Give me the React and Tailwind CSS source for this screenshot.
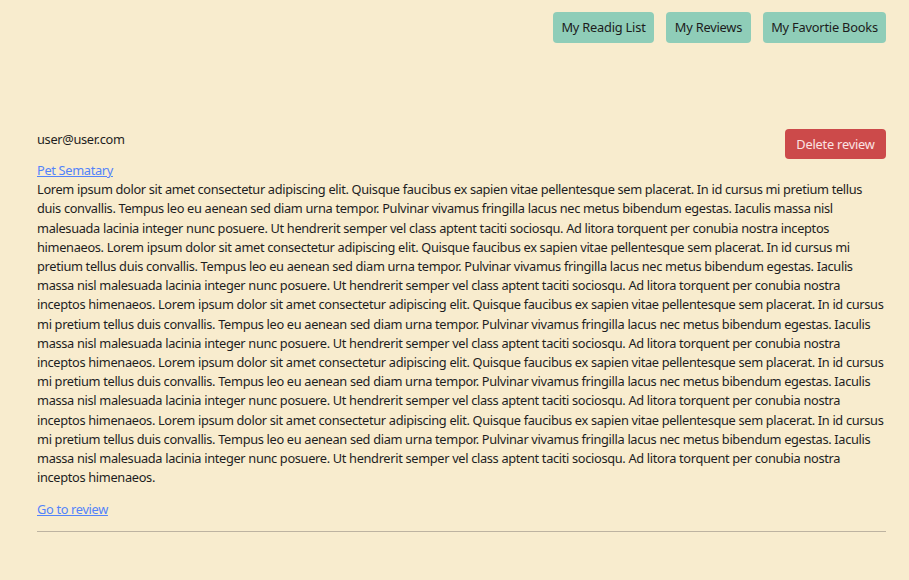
import React from 'react';

const lorem =
  'Lorem ipsum dolor sit amet consectetur adipiscing elit. Quisque faucibus ex sapien vitae pellentesque sem placerat. In id cursus mi pretium tellus duis convallis. Tempus leo eu aenean sed diam urna tempor. Pulvinar vivamus fringilla lacus nec metus bibendum egestas. Iaculis massa nisl malesuada lacinia integer nunc posuere. Ut hendrerit semper vel class aptent taciti sociosqu. Ad litora torquent per conubia nostra inceptos himenaeos.';

const NavButton = ({ width, children }) => (
  <button className={`h-[31px] rounded bg-[#8fcdb8] text-[#1c1c1c] text-[12.8px] tracking-[-0.2px] ${width}`}>
    {children}
  </button>
);

const App = () => {
  const text = [lorem, lorem, lorem, lorem, lorem].join(' ');

  return (
    <div className="min-h-[580px] bg-[#f8ecce] text-[#1e1e1e] font-['Noto_Sans',sans-serif] text-[12.8px] leading-[19.2px] tracking-[-0.33px] pl-[37px] pr-[23px]">
      <div className="flex justify-end gap-3 pt-3">
        <NavButton width="w-[101px]">My Readig List</NavButton>
        <NavButton width="w-[85px]">My Reviews</NavButton>
        <NavButton width="w-[123px]">My Favortie Books</NavButton>
      </div>

      <div className="mt-[86px]">
        <div className="flex justify-between items-start">
          <span className="pt-[1px]">user@user.com</span>
          <button className="h-[30px] w-[101px] rounded bg-[#cc4a4a] text-[#fbe3e3] text-[12.8px] tracking-[-0.2px] pt-[1px]">
            Delete review
          </button>
        </div>
        <a href="#" className="block w-fit mt-[2px] text-[#5383fa] underline">
          Pet Sematary
        </a>
        <p>{text}</p>
        <a href="#" className="block w-fit mt-3 pt-[1px] text-[#5383fa] underline">
          Go to review
        </a>
        <hr className="mt-[11px] border-[#bdb3a1]" />
      </div>
    </div>
  );
};

export default App;
